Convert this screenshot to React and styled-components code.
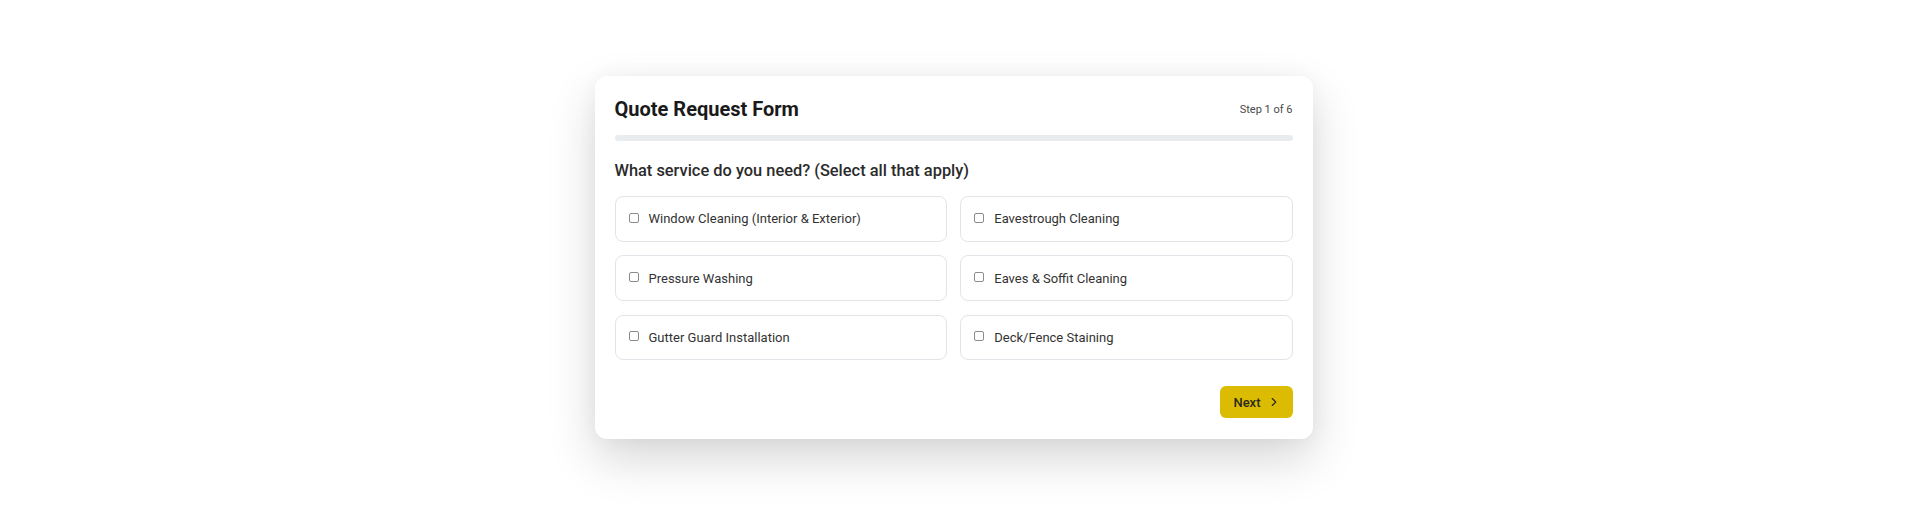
import React from "react";
import styled, { createGlobalStyle } from "styled-components";
import { ChevronRight } from "lucide-react";

const GlobalStyle = createGlobalStyle`
  html, body {
    margin: 0;
    padding: 0;
    background: #ffffff;
  }
  body {
    font-family: Roboto, "Noto Sans", sans-serif;
    -webkit-font-smoothing: antialiased;
  }
  * { box-sizing: border-box; }
`;

const Page = styled.div`
  display: flex;
  justify-content: center;
  align-items: flex-start;
  padding-top: 76px;
  min-height: 514px;
`;

const Card = styled.form`
  width: 718px;
  padding: 20px 20px 20.5px;
  background: #ffffff;
  border-radius: 12px;
  box-shadow: 0 20px 48px rgba(0, 0, 0, 0.16), 0 0 20px rgba(0, 0, 0, 0.04);
  display: flex;
  flex-direction: column;
`;

const Header = styled.div`
  display: flex;
  align-items: center;
  justify-content: space-between;
  height: 27px;
`;

const Title = styled.h1`
  margin: 0;
  font-size: 20px;
  font-weight: 700;
  color: #1a1a1a;
  line-height: 27px;
`;

const StepLabel = styled.span`
  font-size: 11px;
  color: #4a4a4a;
`;

const Progress = styled.div`
  margin-top: 12px;
  height: 6px;
  border-radius: 3px;
  background: #e9ecef;
  overflow: hidden;
`;

const ProgressFill = styled.div`
  height: 100%;
  background: #e9ecef;
`;

const Question = styled.h2`
  margin: 19px 0 14px;
  font-size: 16.4px;
  font-weight: 500;
  line-height: 22px;
  color: #2b2b2b;
`;

const OptionGrid = styled.div`
  display: grid;
  grid-template-columns: 1fr 1fr;
  gap: 13.5px;
`;

const Option = styled.label`
  display: flex;
  align-items: center;
  gap: 10px;
  height: 45.8px;
  padding: 0 12px 0 13px;
  border: 1px solid #e1e4e8;
  border-radius: 8px;
  background: #ffffff;
  cursor: pointer;
  font-size: 13px;
  color: #333333;
`;

const Checkbox = styled.input.attrs({ type: "checkbox" })`
  appearance: none;
  -webkit-appearance: none;
  margin: 0;
  flex: none;
  width: 10px;
  height: 10px;
  border: 1px solid #8c8c8c;
  border-radius: 2px;
  background: #ffffff;
  position: relative;
  top: -1px;
`;

const Footer = styled.div`
  display: flex;
  justify-content: flex-end;
  margin-top: 26px;
`;

const NextButton = styled.button`
  display: inline-flex;
  align-items: center;
  gap: 6px;
  height: 32px;
  padding: 0 12px 0 13px;
  border: none;
  border-radius: 6px;
  background: #dcbb03;
  color: #2a2a1a;
  font-family: inherit;
  font-size: 13px;
  font-weight: 500;
  cursor: pointer;
`;

const services = [
  "Window Cleaning (Interior & Exterior)",
  "Eavestrough Cleaning",
  "Pressure Washing",
  "Eaves & Soffit Cleaning",
  "Gutter Guard Installation",
  "Deck/Fence Staining",
];

export default function App() {
  const step = 1;
  const total = 6;
  return (
    <>
      <GlobalStyle />
      <Page>
        <Card onSubmit={(e) => e.preventDefault()}>
          <Header>
            <Title>Quote Request Form</Title>
            <StepLabel>
              Step {step} of {total}
            </StepLabel>
          </Header>
          <Progress>
            <ProgressFill style={{ width: "0%" }} />
          </Progress>
          <Question>What service do you need? (Select all that apply)</Question>
          <OptionGrid>
            {services.map((s) => (
              <Option key={s}>
                <Checkbox name="service" value={s} />
                <span>{s}</span>
              </Option>
            ))}
          </OptionGrid>
          <Footer>
            <NextButton type="button">
              Next
              <ChevronRight size={14} strokeWidth={2} />
            </NextButton>
          </Footer>
        </Card>
      </Page>
    </>
  );
}
